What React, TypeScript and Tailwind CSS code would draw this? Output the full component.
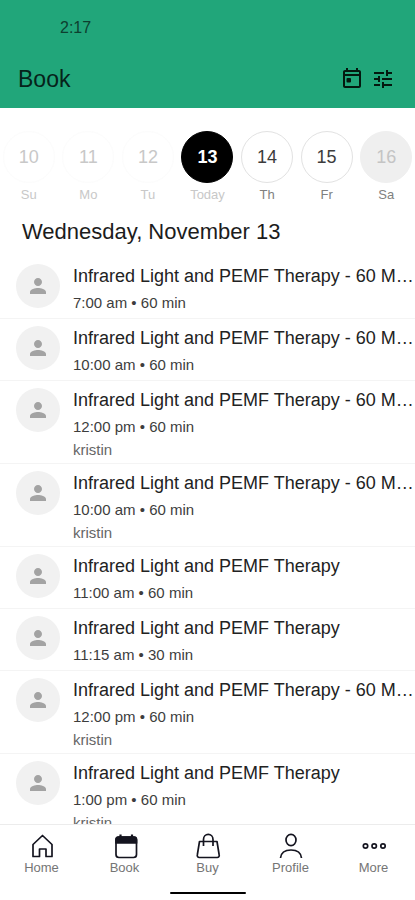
import { useState } from 'react'
import type { ReactNode } from 'react'
import { MdPerson, MdTune } from 'react-icons/md'

type Day = { num: number; label: string; state: 'past' | 'open' | 'closed' }
type Session = { name: string; time: string; length: string; staff?: string }

const days: Day[] = [
  { num: 10, label: 'Su', state: 'past' },
  { num: 11, label: 'Mo', state: 'past' },
  { num: 12, label: 'Tu', state: 'past' },
  { num: 13, label: 'Today', state: 'open' },
  { num: 14, label: 'Th', state: 'open' },
  { num: 15, label: 'Fr', state: 'open' },
  { num: 16, label: 'Sa', state: 'closed' },
]

const therapy = 'Infrared Light and PEMF Therapy'
const therapy60 = 'Infrared Light and PEMF Therapy - 60 M…'

const sessions: Session[] = [
  { name: therapy60, time: '7:00 am', length: '60 min' },
  { name: therapy60, time: '10:00 am', length: '60 min' },
  { name: therapy60, time: '12:00 pm', length: '60 min', staff: 'kristin' },
  { name: therapy60, time: '10:00 am', length: '60 min', staff: 'kristin' },
  { name: therapy, time: '11:00 am', length: '60 min' },
  { name: therapy, time: '11:15 am', length: '30 min' },
  { name: therapy60, time: '12:00 pm', length: '60 min', staff: 'kristin' },
  { name: therapy, time: '1:00 pm', length: '60 min', staff: 'kristin' },
]

function TodayIcon() {
  return (
    <svg viewBox="0 0 24 24" className="size-6" fill="currentColor" aria-hidden="true">
      <path d="M19 3h-1V1h-2v2H8V1H6v2H5c-1.1 0-2 .9-2 2v14c0 1.1.9 2 2 2h14c1.1 0 2-.9 2-2V5c0-1.1-.9-2-2-2zm0 16H5V9h14v10zM5 7V5h14v2H5z" />
      <rect x="6.500" y="11" width="4.500" height="4.500" rx="1" />
    </svg>
  )
}

function NavIcon({ children }: { children: ReactNode }) {
  return (
    <svg
      viewBox="0 0 26 26"
      className="size-[26px]"
      fill="none"
      stroke="currentColor"
      strokeWidth="1.7"
      strokeLinejoin="round"
      aria-hidden="true"
    >
      {children}
    </svg>
  )
}

const tabs = [
  {
    label: 'Home',
    icon: <path d="M4 11.500 13.500 2.500l9.500 9v12h-6v-7.500h-6.500v7.500H4z" />,
  },
  {
    label: 'Book',
    icon: (
      <>
        <rect x="4" y="4" width="20.500" height="20.500" rx="3" />
        <path d="M4 10V6.500A2.500 2.500 0 0 1 6.500 4H22A2.500 2.500 0 0 1 24.500 6.500V10z" fill="currentColor" />
        <path d="M8.500 1.500v4M20 1.500v4" strokeWidth="2.200" />
      </>
    ),
  },
  {
    label: 'Buy',
    icon: (
      <>
        <path d="M4.500 8.500h17.500l2.200 13.500a2 2 0 0 1-2 2.500H4.300a2 2 0 0 1-2-2.500z" />
        <path d="M8.500 13V6.500a4.700 5 0 0 1 9.500 0V13" />
      </>
    ),
  },
  {
    label: 'Profile',
    icon: (
      <>
        <ellipse cx="13" cy="7" rx="5" ry="5.700" />
        <path d="M2.500 25c.5-5 4-8 10.500-8s10 3 10.500 8" />
      </>
    ),
  },
  {
    label: 'More',
    icon: (
      <>
        <circle cx="4.500" cy="13" r="2.200" />
        <circle cx="13.200" cy="13" r="2.200" />
        <circle cx="22" cy="13" r="2.200" />
      </>
    ),
  },
]

function circleClass(day: Day, selected: boolean) {
  if (selected) return 'border-black bg-black text-white font-bold'
  if (day.state === 'past') return 'border-[#fcfcfc] bg-white text-[#c8c8c8]'
  if (day.state === 'closed') return 'border-[#efefef] bg-[#efefef] text-[#c4c4c4]'
  return 'border-[#e2e2e2] bg-white text-[#3c3c3c]'
}

function labelClass(day: Day) {
  if (day.num <= 13) return 'text-[#c8c8c8]'
  return 'text-[#808080]'
}

export default function App() {
  const [selected, setSelected] = useState(13)

  return (
    <div className="flex h-screen flex-col overflow-hidden bg-white font-['Liberation_Sans',Arial,sans-serif] text-black">
      <header className="bg-[#21a67a] pt-4">
        <div className="pl-[60px] text-[16px] leading-6 text-[#0d3f2f]">2:17</div>
        <div className="flex h-[68px] items-center justify-between pt-[10px] pr-5 pl-[18px]">
          <h1 className="text-[23px] leading-8 text-[#06231a]">Book</h1>
          <div className="flex items-center gap-[7px] text-[#04180f]">
            <button aria-label="Today">
              <TodayIcon />
            </button>
            <button aria-label="Filters">
              <MdTune className="size-6" />
            </button>
          </div>
        </div>
      </header>

      <div className="-mx-px grid grid-cols-7 pt-[23px]">
        {days.map((day) => (
          <button
            key={day.num}
            onClick={() => setSelected(day.num)}
            className="flex flex-col items-center gap-[2px]"
          >
            <span
              className={`flex size-[52px] items-center justify-center rounded-full border text-[18px] ${circleClass(day, selected === day.num)}`}
            >
              {day.num}
            </span>
            <span className={`text-[13px] leading-5 ${labelClass(day)}`}>{day.label}</span>
          </button>
        ))}
      </div>

      <h2 className="px-[22px] pt-[11px] pb-[9px] text-[22px] leading-8 text-[#1c1c1c]">
        Wednesday, November 13
      </h2>

      <ul className="min-h-0 flex-1 overflow-y-auto [scrollbar-width:none]">
        {sessions.map((s, i) => (
          <li key={i} className="flex gap-[13px] border-b border-[#f4f4f4] pt-[5px] pb-[3px] pl-4">
            <div className="mt-[2px] flex size-11 shrink-0 items-center justify-center rounded-full bg-[#f1f1f1] text-[#a3a3a3]">
              <MdPerson className="size-6" />
            </div>
            <div className="min-w-0 flex-1">
              <h3 className="truncate text-[18px] leading-7 text-[#222]">{s.name}</h3>
              <p className="text-[15px] leading-[25px] text-[#3d3d3d]">
                {s.time} • {s.length}
              </p>
              {s.staff && <p className="text-[15px] leading-[21px] text-[#666]">{s.staff}</p>}
            </div>
          </li>
        ))}
      </ul>

      <nav className="border-t border-[#ececec] bg-white pt-2 pb-[6px]">
        <div className="grid grid-cols-5">
          {tabs.map((tab) => (
            <a key={tab.label} href="#" className="flex flex-col items-center text-[#14141f]">
              <NavIcon>{tab.icon}</NavIcon>
              <span className="text-[13px] leading-[18px] text-[#757575]">{tab.label}</span>
            </a>
          ))}
        </div>
        <div className="mx-auto mt-[15px] h-[2px] w-[76px] rounded-full bg-black" />
      </nav>
    </div>
  )
}
